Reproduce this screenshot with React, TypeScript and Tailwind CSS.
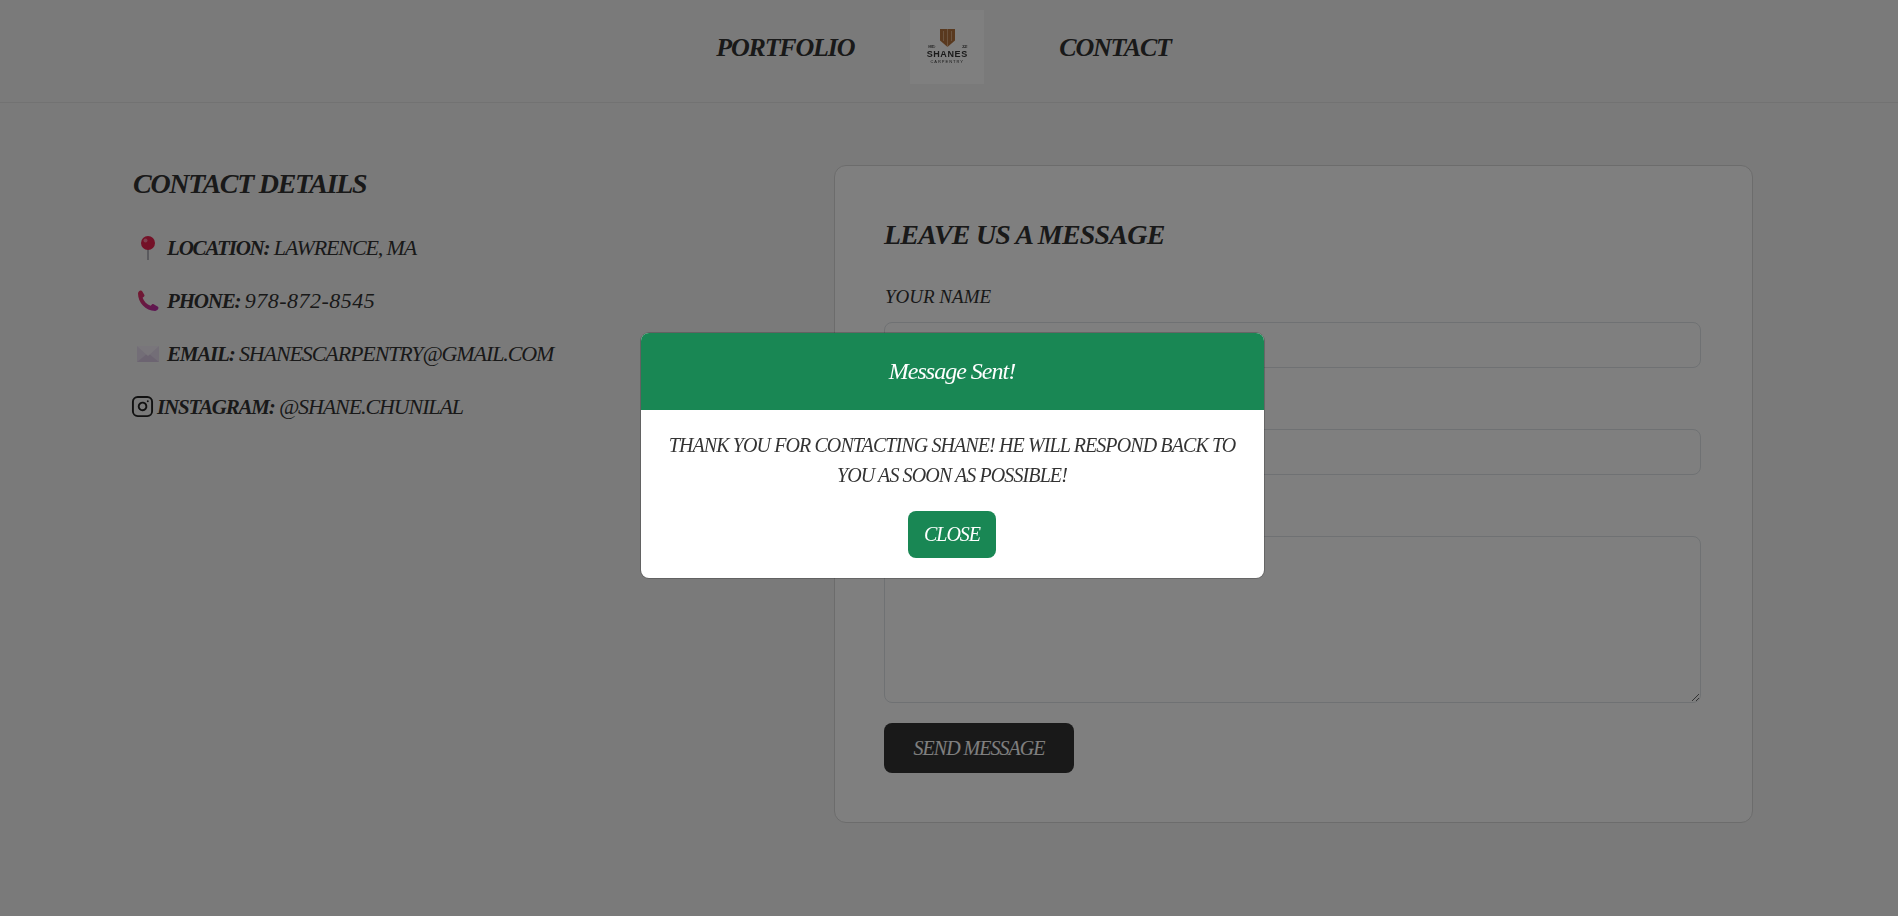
import React from 'react';
import { Instagram } from 'lucide-react';

const script = "font-['Liberation_Serif',serif] italic";

const Pin = () => (
  <svg width="22" height="24" viewBox="0 0 22 24" className="shrink-0">
    <rect x="10" y="10" width="2" height="14" fill="#b5b5bd" />
    <circle cx="11" cy="7" r="7" fill="#e8224f" />
    <circle cx="8.5" cy="4.5" r="2" fill="#fb7d9a" />
  </svg>
);

const Phone = () => (
  <svg width="22" height="22" viewBox="0 0 22 22" className="shrink-0">
    <defs>
      <linearGradient id="ph" x1="0" y1="0" x2="1" y2="1">
        <stop offset="0" stopColor="#e8305a" />
        <stop offset="1" stopColor="#b82fb0" />
      </linearGradient>
    </defs>
    <path
      d="M1 3.5C1 2 2.4.6 3.6.4c.8-.1 1.2.2 1.6.9l2.1 3.4c.4.7.3 1.3-.2 1.8L5.6 7.8c1.2 3.6 4.4 6.8 8 8l1.3-1.4c.5-.5 1.2-.6 1.8-.2l3.9 2.4c.7.4 1 1 .8 1.7-.3 1.2-1.6 2.6-3.1 2.6C8.6 21 1 12.6 1 3.5z"
      fill="url(#ph)"
    />
  </svg>
);

const Envelope = () => (
  <svg width="22" height="16" viewBox="0 0 22 16" className="shrink-0">
    <rect width="22" height="16" fill="#e6dcee" />
    <path d="M0 16 11 7l11 9z" fill="#d8c9e2" />
    <path d="M0 0l11 10L22 0z" fill="#f3edf6" />
  </svg>
);

const Logo = () => (
  <div className="w-[74px] h-[74px] bg-white flex flex-col items-center pt-[19px] blur-[0.4px] not-italic">
    <svg width="15" height="18" viewBox="0 0 15 18">
      <path d="M0 0h15v11.5L7.5 18 0 11.5z" fill="#b3733f" />
      <path d="M7.5 0v18M3.5 2v10M11.5 2v10" stroke="#e0b48c" strokeWidth="0.8" />
    </svg>
    <div className="font-['Liberation_Sans',sans-serif] text-[#333] leading-none flex flex-col items-center -mt-[2px] font-normal">
      <span className="text-[4px] w-[38px] flex justify-between">
        <span>ESTD</span>
        <span>2022</span>
      </span>
      <span className="text-[9px] font-bold tracking-[0.6px] mt-[1px]">SHANES</span>
      <span className="text-[4px] tracking-[1px] mt-[1px]">CARPENTRY</span>
    </div>
  </div>
);

function Field({ label, textarea }: { label: string; textarea?: boolean }) {
  const box = 'block w-[817px] border border-[#dee2e6] rounded-lg bg-white';
  return (
    <div className="mb-[20px]">
      <label className="block h-[41px] text-[19px] leading-[28px] pl-[1px] pt-[2px] text-[#333]">{label}</label>
      {textarea ? <textarea className={`${box} h-[167px]`} /> : <input className={`${box} h-[46px]`} />}
    </div>
  );
}

export default function App() {
  return (
    <div className={`${script} relative min-h-screen bg-[#f5f5f5] text-[#333]`}>
      <header className="h-[103px] border-b border-[#e4e4e4] flex items-center justify-center pr-[11px] pb-[8px] text-[26px] font-bold tracking-[-1.2px]">
        <a className="mr-[56px]">PORTFOLIO</a>
        <Logo />
        <a className="ml-[75px]">CONTACT</a>
      </header>

      <main className="flex pl-[133px] pt-[62px]">
        <section className="w-[701px]">
          <h2 className="text-[28px] font-bold tracking-[-1.3px] leading-[36px] h-[52px] mb-[4px] pt-[1px]">CONTACT DETAILS</h2>
          <ul className="text-[22px] flex flex-col tracking-[-1.1px]">
            <li className="h-[53px] flex items-center gap-[8px] pl-[4px]">
              <Pin />
              <span><b className="text-[21px] tracking-[-1.2px]">LOCATION:</b> LAWRENCE, MA</span>
            </li>
            <li className="h-[53px] flex items-center gap-[8px] pl-[4px]">
              <Phone />
              <span><b className="text-[21px] tracking-[-1.2px]">PHONE:</b> <span className="tracking-[0.5px]">978-872-8545</span></span>
            </li>
            <li className="h-[53px] flex items-center gap-[8px] pl-[4px]">
              <Envelope />
              <span><b className="text-[21px] tracking-[-1.2px]">EMAIL:</b> SHANESCARPENTRY@GMAIL.COM</span>
            </li>
            <li className="h-[53px] flex items-center gap-[3px]">
              <Instagram size={23} strokeWidth={2} className="text-[#222] -ml-[2px]" />
              <span><b className="text-[21px] tracking-[-1.2px]">INSTAGRAM:</b> @SHANE.CHUNILAL</span>
            </li>
          </ul>
        </section>

        <section className="w-[919px] h-[658px] bg-white border border-[#d8d8d8] rounded-xl px-[49px] pt-[51px]">
          <h2 className="text-[28px] font-bold tracking-[-0.8px] leading-[36px] h-[64px]">LEAVE US A MESSAGE</h2>
          <Field label="YOUR NAME" />
          <Field label="YOUR EMAIL" />
          <Field label="YOUR MESSAGE" textarea />
          <button className="w-[190px] h-[50px] bg-[#333] rounded-lg text-white text-[20px] tracking-[-1px]">SEND MESSAGE</button>
        </section>
      </main>

      {/* Backdrop + modal */}
      <div className="fixed inset-0 bg-black/50 flex items-center justify-center pl-[6px] pb-[6px]">
        <div className="w-[623px] h-[245px] bg-white rounded-lg shadow-[0_0_0_1px_rgba(0,0,0,0.2)] overflow-hidden flex flex-col">
          <div className="h-[77px] shrink-0 bg-[#198754] text-white text-[24px] tracking-[-1px] flex items-center justify-center">
            Message Sent!
          </div>
          <div className="flex flex-col items-center px-[20px] pt-[20px] text-center">
            <p className="text-[20px] tracking-[-0.9px] leading-[30px] text-[#333]">
              THANK YOU FOR CONTACTING SHANE! HE WILL RESPOND BACK TO YOU AS SOON AS POSSIBLE!
            </p>
            <button className="mt-[21px] w-[88px] h-[47px] rounded-lg bg-[#198754] text-white text-[20px] tracking-[-1px]">CLOSE</button>
          </div>
        </div>
      </div>
    </div>
  );
}
